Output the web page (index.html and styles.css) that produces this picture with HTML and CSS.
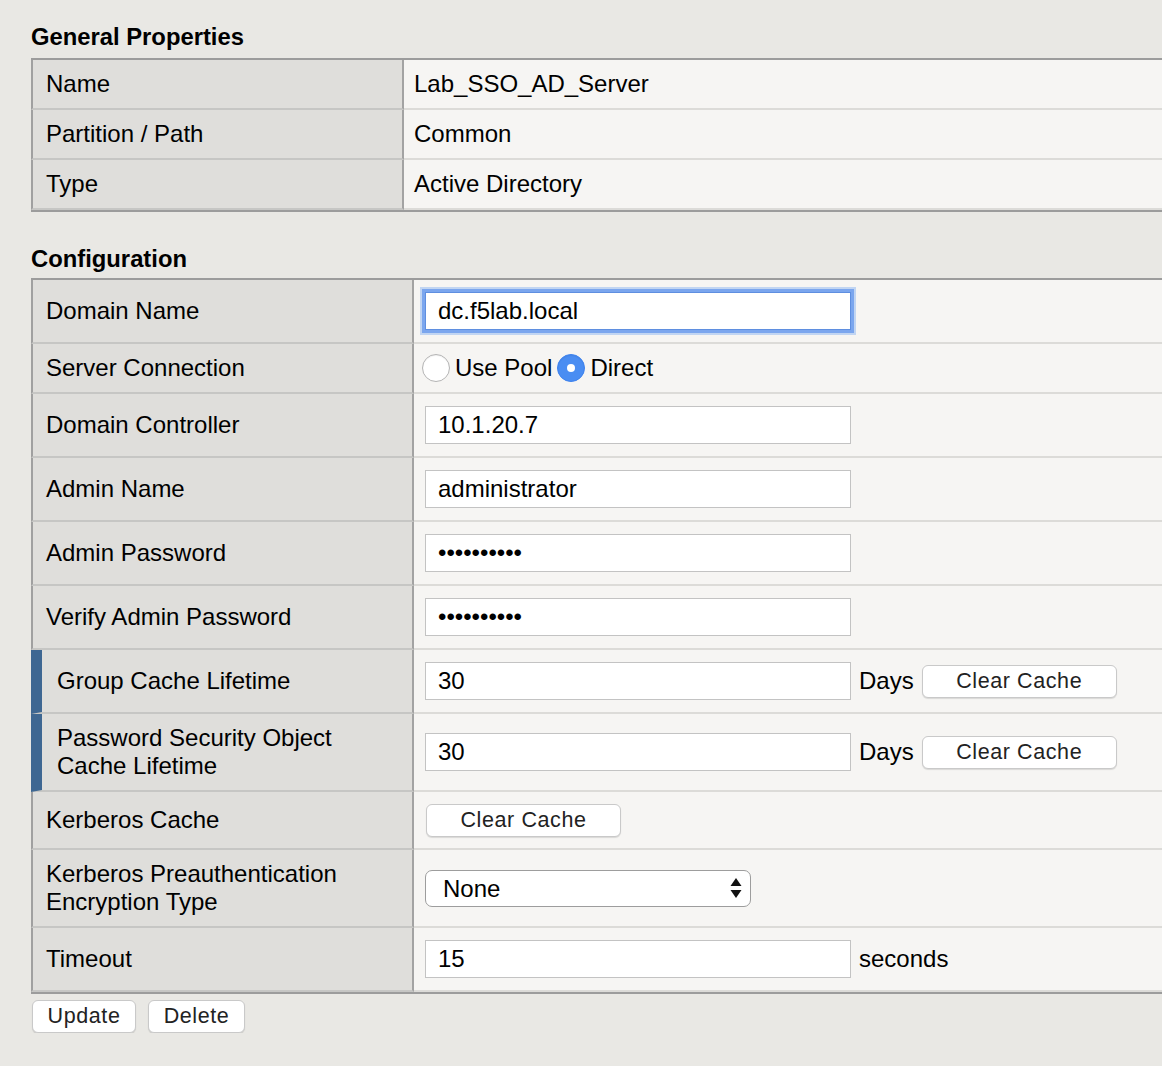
FILE: index.html
```html
<!DOCTYPE html>
<html lang="en">
<head>
<meta charset="utf-8">
<title>Lab_SSO_AD_Server</title>
<link rel="stylesheet" href="styles.css">
</head>
<body>
<div class="page">
  <h2 class="section-title first">General Properties</h2>
  <div class="grid props">
    <div class="row h48"><div class="label">Name</div><div class="value">Lab_SSO_AD_Server</div></div>
    <div class="row h48"><div class="label">Partition / Path</div><div class="value">Common</div></div>
    <div class="row h48"><div class="label">Type</div><div class="value">Active Directory</div></div>
  </div>

  <h2 class="section-title">Configuration</h2>
  <div class="grid config">
    <div class="row h62"><div class="label">Domain Name</div><div class="value"><input class="field focused" type="text" value="dc.f5lab.local"></div></div>
    <div class="row h48"><div class="label">Server Connection</div><div class="value radios">
      <label class="radio"><input type="radio" name="conn"><span>Use Pool</span></label>
      <label class="radio"><input type="radio" name="conn" checked><span>Direct</span></label>
    </div></div>
    <div class="row h62"><div class="label">Domain Controller</div><div class="value"><input class="field" type="text" value="10.1.20.7"></div></div>
    <div class="row h62"><div class="label">Admin Name</div><div class="value"><input class="field" type="text" value="administrator"></div></div>
    <div class="row h62"><div class="label">Admin Password</div><div class="value"><input class="field" type="password" value="passwordxy"></div></div>
    <div class="row h62"><div class="label">Verify Admin Password</div><div class="value"><input class="field" type="password" value="passwordxy"></div></div>
    <div class="row h62"><div class="label flag">Group Cache Lifetime</div><div class="value"><input class="field" type="text" value="30"><span class="unit">Days</span><button class="btn wide" type="button">Clear Cache</button></div></div>
    <div class="row h76"><div class="label flag">Password Security Object<br>Cache Lifetime</div><div class="value"><input class="field" type="text" value="30"><span class="unit">Days</span><button class="btn wide" type="button">Clear Cache</button></div></div>
    <div class="row h56"><div class="label">Kerberos Cache</div><div class="value"><button class="btn wide kerb" type="button">Clear Cache</button></div></div>
    <div class="row h76"><div class="label">Kerberos Preauthentication<br>Encryption Type</div><div class="value">
      <div class="select-wrap">
        <select class="select"><option>None</option></select>
        <svg class="arrows" width="12" height="21" viewBox="0 0 12 21" aria-hidden="true"><path d="M6 0 L11.5 8 L0.5 8 Z" fill="#111"/><path d="M0.5 12 L11.5 12 L6 20 Z" fill="#111"/></svg>
      </div>
    </div></div>
    <div class="row h62"><div class="label">Timeout</div><div class="value"><input class="field" type="text" value="15"><span class="unit">seconds</span></div></div>
  </div>

  <div class="actions">
    <button class="btn update" type="button">Update</button>
    <button class="btn delete" type="button">Delete</button>
  </div>
</div>
</body>
</html>
```

FILE: styles.css
```css
html, body {
  margin: 0;
  padding: 0;
  background: #e9e8e4;
  overflow: hidden;
}

body {
  font-family: "Liberation Sans", Arial, Helvetica, sans-serif;
  font-size: 24px;
  color: #000;
}

.page {
  padding-left: 31px;
}

.section-title {
  margin: 33px 0 5px 0;
  font-size: 23.8px;
  line-height: 28px;
  font-weight: bold;
}

.section-title.first {
  margin-top: 0;
  padding-top: 23px;
  margin-bottom: 7px;
}

.grid {
  display: grid;
  border-top: 2px solid #9c9c9c;
  border-bottom: 2px solid #9c9c9c;
}

.props {
  grid-template-columns: 373px 1fr;
}

.config {
  grid-template-columns: 383px 1fr;
}

.row {
  display: contents;
}

.label,
.value {
  display: flex;
  align-items: center;
  line-height: 28px;
}

.label {
  box-sizing: border-box;
  background: #dfdedb;
  border-left: 2px solid #a0a0a0;
  border-right: 2px solid #a3a3a3;
  border-bottom: 2px solid #c6c6c4;
  padding-left: 13px;
}

.label.flag {
  border-left: 11px solid #3e6792;
  padding-left: 15px;
}

.value {
  box-sizing: border-box;
  background: #f6f5f3;
  border-bottom: 2px solid #dcdbd8;
  padding-left: 10px;
  gap: 8px;
}

.config .value {
  padding-left: 11px;
}

.h48 > * { height: 50px; }
.h56 > * { height: 58px; }
.h62 > * { height: 64px; }
.h76 > * { height: 78px; }

.field {
  box-sizing: border-box;
  width: 426px;
  height: 38px;
  margin: 0;
  padding: 0 12px;
  border: 1px solid #c3c3c3;
  border-radius: 0;
  background: #fff;
  font-family: "Liberation Sans", Arial, sans-serif;
  font-size: 24px;
  color: #000;
  outline: none;
}

.field.focused {
  border: 1px solid #5f8fe0;
  box-shadow: 0 0 0 3px #7ba6ee, 0 0 0 5px rgba(150, 185, 240, 0.55);
}

.config .radios {
  padding-left: 8px;
  gap: 5px;
}

.radio {
  display: flex;
  align-items: center;
  gap: 5px;
}

.radio input {
  -webkit-appearance: none;
  appearance: none;
  box-sizing: border-box;
  width: 28px;
  height: 28px;
  margin: 0;
  border-radius: 50%;
  border: 1px solid #b4b4b4;
  background: #fff;
  box-shadow: inset 0 1px 1px rgba(0, 0, 0, 0.06);
  display: inline-grid;
  place-items: center;
}

.radio input:checked {
  border: 1px solid #3d82ee;
  background: #4a8df2;
}

.radio input:checked::after {
  content: "";
  width: 8px;
  height: 8px;
  border-radius: 50%;
  background: #fff;
}

.unit {
  color: #000;
}

.btn {
  box-sizing: border-box;
  height: 33px;
  margin: 0;
  padding: 0;
  background: #fff;
  border: 1px solid #c9c9c9;
  border-radius: 6px;
  box-shadow: 0 1px 1px rgba(0, 0, 0, 0.12);
  font-family: "Liberation Sans", Arial, sans-serif;
  font-size: 21.5px;
  letter-spacing: 0.6px;
  color: #222;
}

.btn.wide {
  width: 195px;
}

.btn.kerb {
  margin-left: 1px;
}

.select-wrap {
  position: relative;
  width: 326px;
  height: 37px;
}

.select {
  -webkit-appearance: none;
  appearance: none;
  box-sizing: border-box;
  width: 326px;
  height: 37px;
  margin: 0;
  padding: 0 0 0 17px;
  background: #fff;
  border: 1.5px solid #9d9d9d;
  border-radius: 7px;
  font-family: "Liberation Sans", Arial, sans-serif;
  font-size: 24px;
  color: #000;
}

.arrows {
  position: absolute;
  right: 9px;
  top: 8px;
  pointer-events: none;
}

.actions {
  display: flex;
  gap: 12px;
  margin-top: 6px;
  padding-left: 1px;
}

.btn.update {
  width: 104px;
}

.btn.delete {
  width: 97px;
}
```
